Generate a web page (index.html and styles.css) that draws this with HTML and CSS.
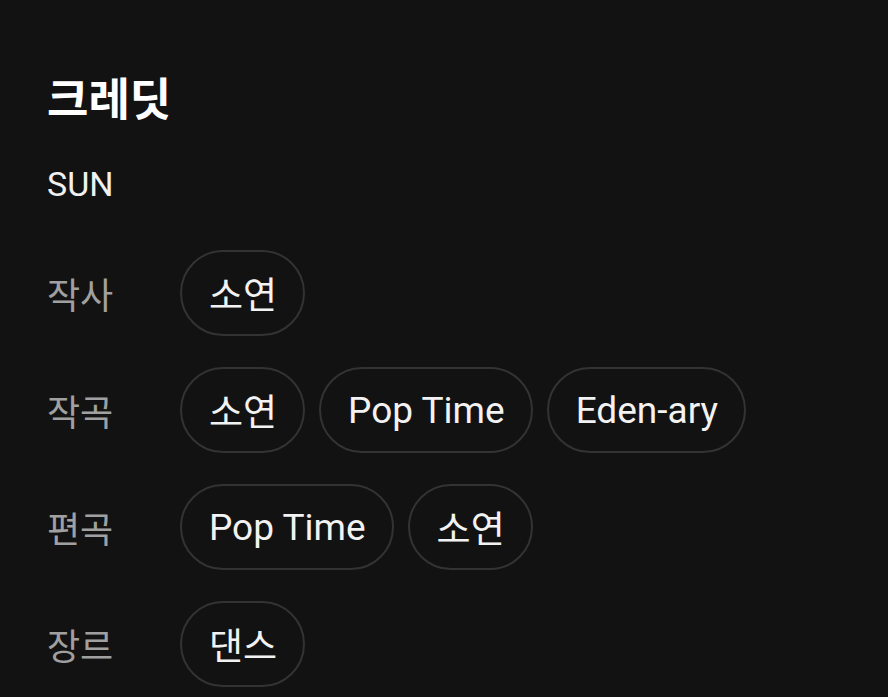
FILE: index.html
```html
<!DOCTYPE html>
<html lang="ko">
<head>
<meta charset="utf-8">
<link rel="stylesheet" href="styles.css">
</head>
<body>
<div class="credits">
  <h1 class="title">크레딧</h1>
  <div class="artist">SUN</div>
  <div class="rows">
    <div class="row">
      <div class="label">작사</div>
      <div class="chips"><span class="chip">소연</span></div>
    </div>
    <div class="row">
      <div class="label">작곡</div>
      <div class="chips"><span class="chip">소연</span><span class="chip">Pop Time</span><span class="chip">Eden-ary</span></div>
    </div>
    <div class="row">
      <div class="label">편곡</div>
      <div class="chips"><span class="chip">Pop Time</span><span class="chip">소연</span></div>
    </div>
    <div class="row">
      <div class="label">장르</div>
      <div class="chips"><span class="chip">댄스</span></div>
    </div>
  </div>
</div>
</body>
</html>
```

FILE: styles.css
```css
html, body {
  margin: 0;
  padding: 0;
  background: #121212;
}
body {
  font-family: Roboto, "Noto Sans CJK KR", sans-serif;
  color: #f2f2f2;
}
.credits {
  padding: 70px 0 0 47px;
}
.title {
  margin: 0;
  font-family: "Noto Sans CJK KR", sans-serif;
  font-weight: 700;
  font-size: 45px;
  line-height: 54px;
  color: #ffffff;
}
.artist {
  margin-top: 40px;
  font-size: 34px;
  line-height: 40px;
  color: #f0f0f0;
}
.rows {
  margin-top: 46px;
  display: flex;
  flex-direction: column;
  gap: 31px;
}
.row {
  display: flex;
  align-items: center;
}
.label {
  width: 133px;
  flex: none;
  font-family: "Noto Sans CJK KR", sans-serif;
  font-size: 36px;
  color: #a0a0a0;
}
.chips {
  display: flex;
  gap: 14px;
}
.chip {
  box-sizing: border-box;
  height: 86px;
  padding: 0 26px 0 27px;
  display: flex;
  align-items: center;
  border: 2px solid #333333;
  border-radius: 43px;
  font-size: 37px;
  color: #f2f2f2;
}
```
